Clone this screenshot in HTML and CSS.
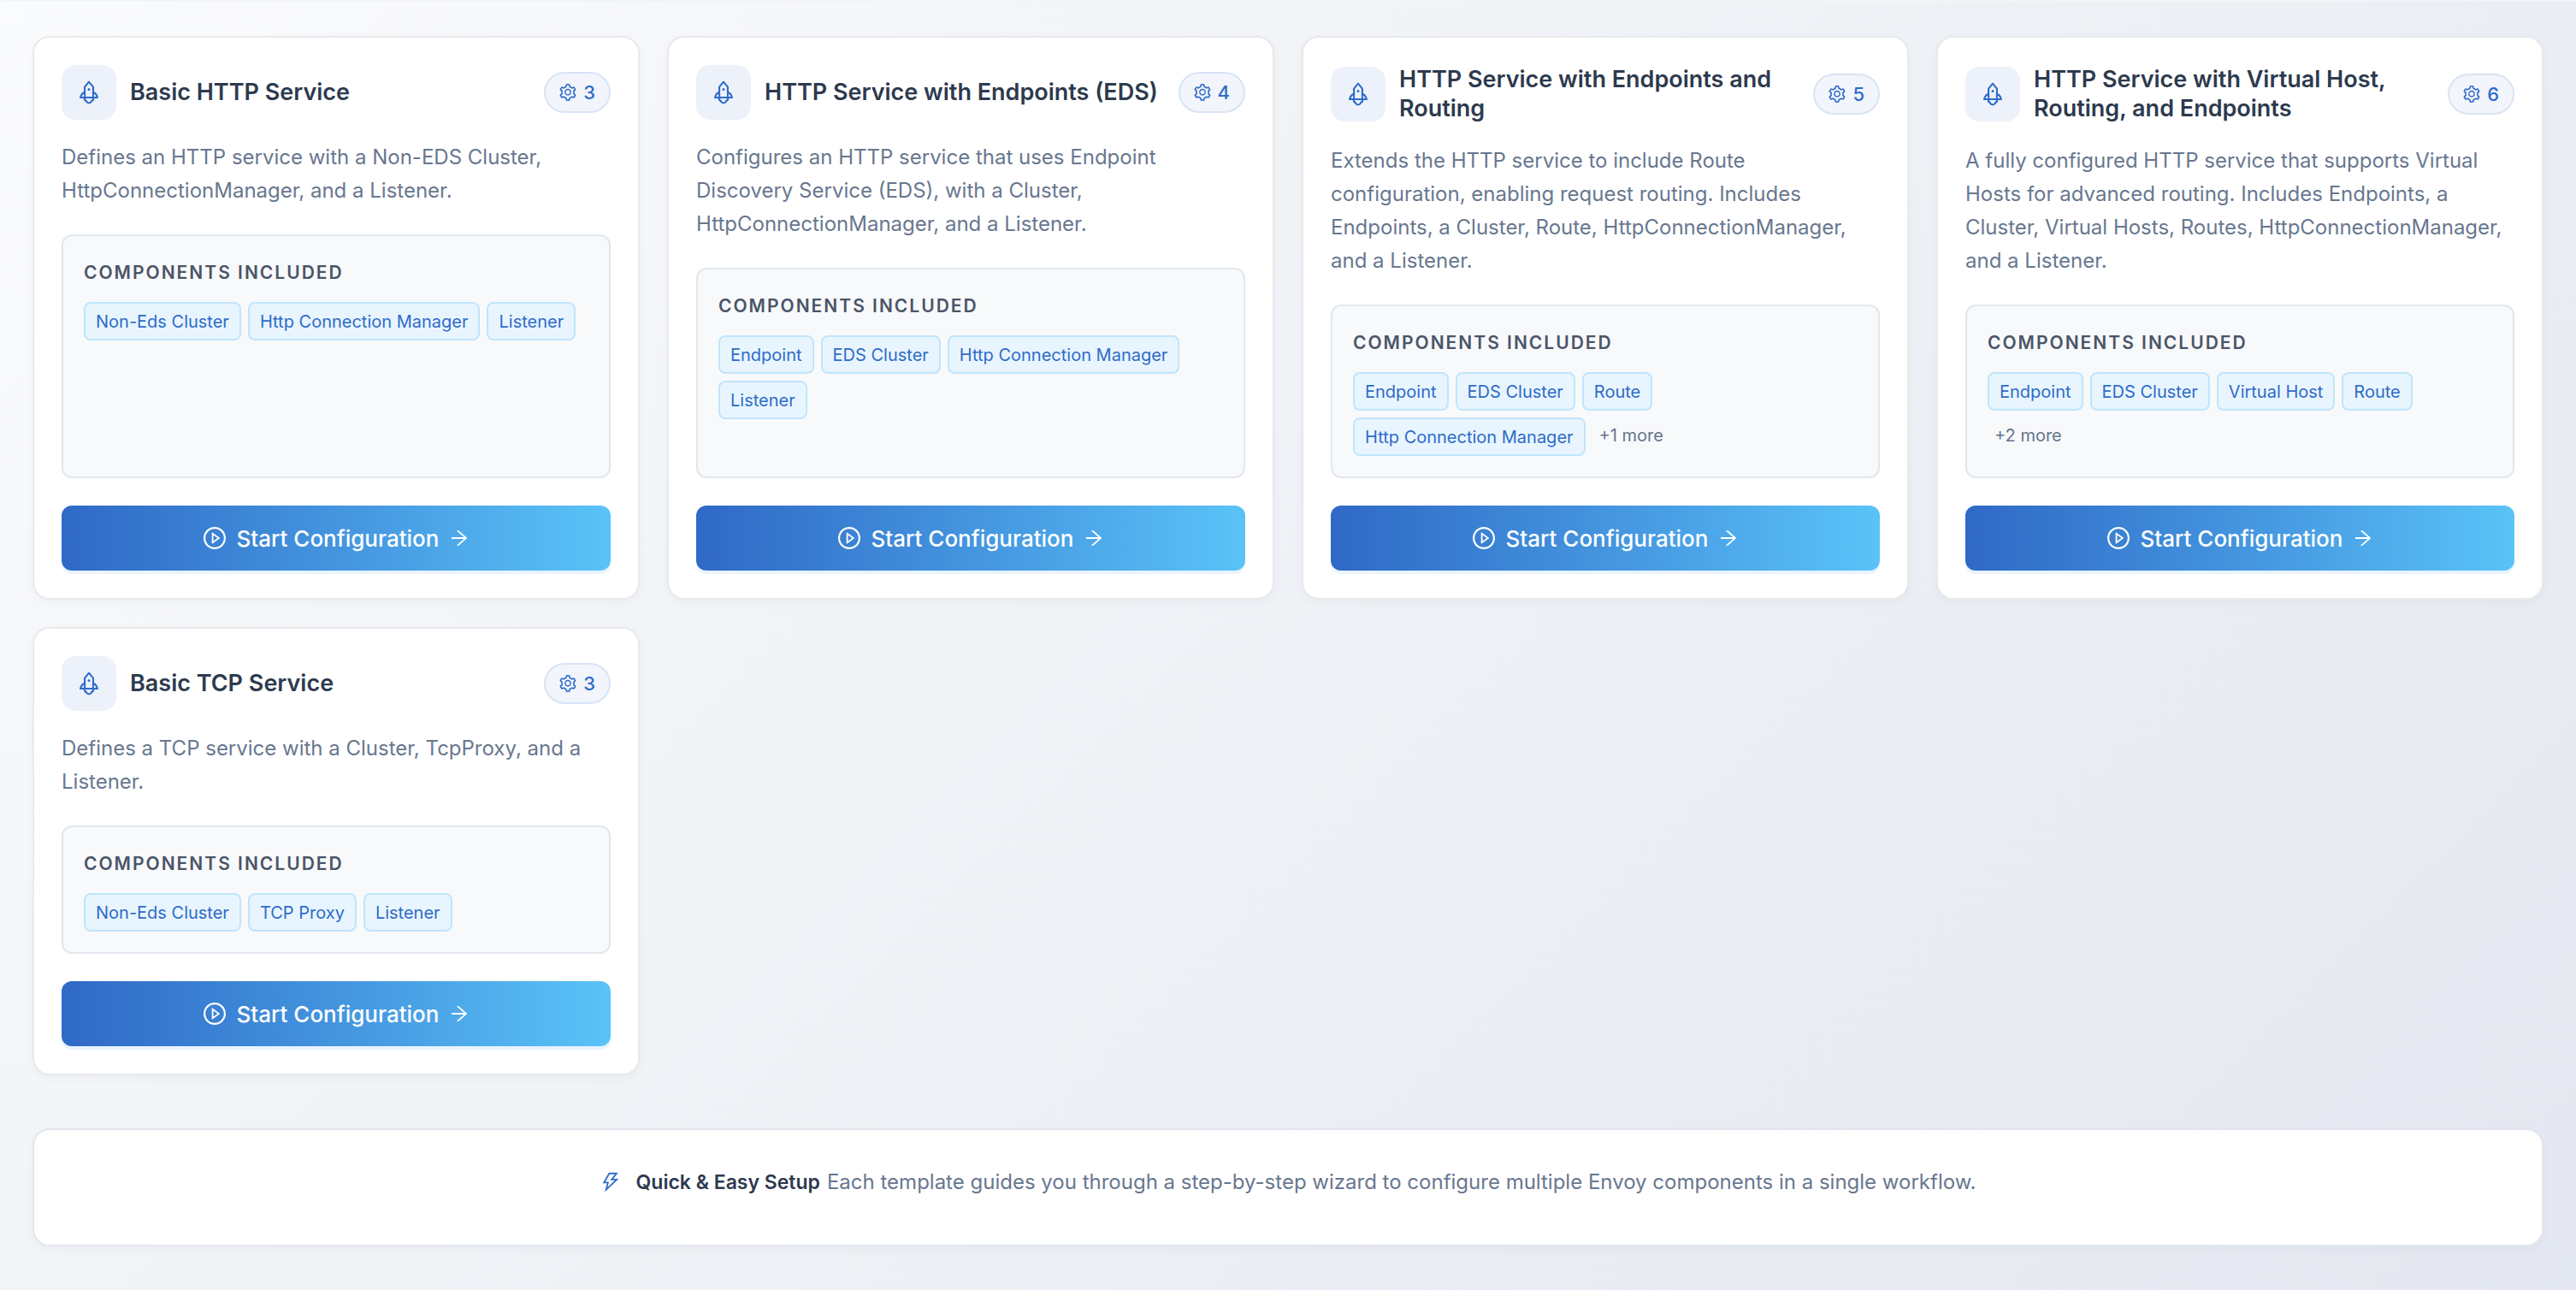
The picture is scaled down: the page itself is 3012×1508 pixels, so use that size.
FILE: index.html
```html
<!DOCTYPE html>
<html lang="en">
<head>
<meta charset="utf-8">
<title>Service templates</title>
<link rel="stylesheet" href="styles.css">
</head>
<body>
<svg class="sprite" aria-hidden="true">
  <symbol id="rocket" viewBox="64 64 896 896"><path d="M864 736c0-111.6-65.4-208-160-252.900V317.300c0-15.100-5.300-29.700-15.100-41.200L536.500 95.400C530.100 87.800 521 84 512 84s-18.100 3.800-24.500 11.400L335.100 276.100a63.970 63.970 0 00-15.100 41.200v165.800C225.400 528 160 624.400 160 736h156.500c-2.300 7.200-3.500 15-3.500 23.800 0 22.100 7.600 43.700 21.400 60.800a97.200 97.200 0 0043.100 30.600c23.100 54 75.600 88.800 134.500 88.800 29.100 0 57.300-8.600 81.400-24.800 23.600-15.800 41.900-37.900 53-64a97 97 0 0043.100-30.500 97.520 97.520 0 0021.400-60.800c0-8.400-1.100-16.400-3.100-23.800H864zM762.300 621.400c9.400 14.600 17 30.300 22.500 46.600H700V558.700a211.600 211.600 0 0162.300 62.700zM388 483.100V318.800l124-147 124 147V668H388V483.100zM239.200 668c5.500-16.300 13.100-32 22.500-46.600 16.300-25.200 37.500-46.500 62.300-62.700V668h-84.800zm388.900 116.200c-5.200 3-11.200 4.200-17.100 3.400l-19.500-2.400-2.800 19.400c-5.400 37.900-38.400 66.500-76.700 66.500-38.300 0-71.300-28.600-76.700-66.500l-2.800-19.500-19.500 2.500a27.700 27.700 0 01-17.100-3.500c-8.700-5-14.100-14.300-14.100-24.400 0-10.600 5.900-19.400 14.600-23.800h231.300c8.800 4.500 14.600 13.300 14.600 23.800-.1 10.200-5.500 19.600-14.200 24.500zM464 400a48 48 0 1096 0 48 48 0 10-96 0z"/></symbol>
  <symbol id="gear" viewBox="64 64 896 896"><path d="M924.800 625.700l-65.500-56c3.100-19 4.700-38.400 4.700-57.800s-1.600-38.800-4.700-57.800l65.500-56a32.030 32.030 0 009.300-35.200l-.9-2.600a443.740 443.740 0 00-79.700-137.900l-1.800-2.100a32.120 32.120 0 00-35.100-9.500l-81.300 28.900c-30-24.600-63.500-44-99.700-57.600l-15.700-85a32.050 32.050 0 00-25.800-25.700l-2.700-.5c-52.100-9.400-106.900-9.400-159 0l-2.700.5a32.050 32.050 0 00-25.800 25.700l-15.800 85.400a351.860 351.860 0 00-99 57.400l-81.900-29.100a32 32 0 00-35.100 9.500l-1.800 2.100a446.020 446.020 0 00-79.700 137.900l-.9 2.600c-4.500 12.500-.8 26.500 9.300 35.200l66.300 56.600c-3.100 18.800-4.600 38-4.600 57.100 0 19.200 1.500 38.400 4.600 57.100L99 625.500a32.030 32.030 0 00-9.300 35.200l.9 2.600c18.100 50.400 44.900 96.900 79.700 137.900l1.800 2.100a32.120 32.120 0 0035.100 9.500l81.900-29.100c29.800 24.500 63.100 43.900 99 57.400l15.800 85.400a32.050 32.050 0 0025.800 25.700l2.700.5a449.400 449.400 0 00159 0l2.700-.5a32.050 32.050 0 0025.800-25.700l15.700-85a350 350 0 0099.700-57.600l81.300 28.900a32 32 0 0035.100-9.500l1.800-2.100c34.800-41.100 61.600-87.500 79.700-137.900l.9-2.600c4.500-12.300.8-26.300-9.300-35zM788.300 465.900c2.500 15.100 3.800 30.600 3.800 46.100s-1.300 31-3.800 46.100l-6.600 40.100 74.700 63.900a370.030 370.030 0 01-42.600 73.600L721 702.800l-31.400 25.800c-23.900 19.600-50.500 35-79.300 45.800l-38.100 14.300-17.900 97a377.500 377.500 0 01-85 0l-17.900-97.200-37.800-14.500c-28.500-10.800-55-26.200-78.700-45.700l-31.400-25.900-93.400 33.200c-17-22.900-31.200-47.600-42.600-73.600l75.500-64.500-6.500-40c-2.400-14.900-3.700-30.300-3.700-45.500 0-15.300 1.200-30.600 3.700-45.500l6.500-40-75.500-64.500c11.300-26.100 25.600-50.700 42.600-73.600l93.400 33.200 31.400-25.900c23.700-19.500 50.200-34.900 78.700-45.700l37.900-14.300 17.900-97.200c28.100-3.200 56.800-3.200 85 0l17.900 97 38.100 14.300c28.700 10.800 55.400 26.200 79.300 45.800l31.400 25.800 92.800-32.900c17 22.900 31.200 47.600 42.600 73.600L781.800 426l6.500 39.900zM512 326c-97.200 0-176 78.800-176 176s78.800 176 176 176 176-78.800 176-176-78.800-176-176-176zm79.200 255.200A111.600 111.600 0 01512 614c-29.900 0-58-11.700-79.200-32.800A111.600 111.600 0 01400 502c0-29.900 11.700-58 32.800-79.200C454 401.600 482.100 390 512 390c29.900 0 58 11.600 79.200 32.800A111.600 111.600 0 01624 502c0 29.900-11.700 58-32.800 79.200z"/></symbol>
  <symbol id="play" viewBox="64 64 896 896"><path d="M512 64C264.600 64 64 264.600 64 512s200.600 448 448 448 448-200.600 448-448S759.400 64 512 64zm0 820c-205.400 0-372-166.600-372-372s166.600-372 372-372 372 166.600 372 372-166.600 372-372 372z"/><path d="M719.400 499.100l-296.100-215A15.900 15.900 0 00398 297v430c0 13.100 14.800 20.500 25.300 12.900l296.100-215a15.900 15.900 0 000-25.800zm-257.600 134V390.900L628.500 512 461.800 633.100z"/></symbol>
  <symbol id="arrow" viewBox="64 64 896 896"><path d="M869 487.800L491.200 159.900c-2.900-2.500-6.600-3.900-10.500-3.900h-88.500c-7.400 0-10.800 9.200-5.200 14l350.200 304H152c-4.400 0-8 3.600-8 8v60c0 4.400 3.600 8 8 8h585.100L386.900 854c-5.600 4.900-2.200 14 5.200 14h91.500c1.900 0 3.800-.7 5.200-2L869 536.200a32.070 32.070 0 000-48.400z"/></symbol>
  <symbol id="bolt" viewBox="64 64 896 896"><path d="M848 359.300H627.700L825.800 109c4.100-5.300.4-13-6.300-13H436c-2.800 0-5.500 1.500-6.900 4L170 547.500c-3.100 5.300.7 12 6.900 12h174.400l-89.400 357.600c-1.900 7.800 7.500 13.300 13.300 7.700L853.500 373c5.200-4.900 1.700-13.700-5.500-13.700zM378.200 732.500l60.300-241H281.100l189.600-327.400h224.600L487 427.400h211L378.200 732.500z"/></symbol>
</svg>
<main class="page">
  <section class="grid">
    <article class="card">
      <header class="head"><span class="mark"><svg><use href="#rocket"/></svg></span><h2 class="title">Basic HTTP Service</h2><span class="count"><svg><use href="#gear"/></svg>3</span></header>
      <p class="desc">Defines an HTTP service with a Non-EDS Cluster, HttpConnectionManager, and a Listener.</p>
      <div class="parts"><h3 class="label">Components Included</h3>
        <ul class="tags"><li class="tag">Non-Eds Cluster</li><li class="tag">Http Connection Manager</li><li class="tag">Listener</li></ul></div>
      <button class="start" type="button"><svg class="play"><use href="#play"/></svg><span>Start Configuration</span><svg class="arrow"><use href="#arrow"/></svg></button>
    </article>
    <article class="card">
      <header class="head"><span class="mark"><svg><use href="#rocket"/></svg></span><h2 class="title">HTTP Service with Endpoints (EDS)</h2><span class="count"><svg><use href="#gear"/></svg>4</span></header>
      <p class="desc">Configures an HTTP service that uses Endpoint Discovery Service (EDS), with a Cluster, HttpConnectionManager, and a Listener.</p>
      <div class="parts"><h3 class="label">Components Included</h3>
        <ul class="tags"><li class="tag">Endpoint</li><li class="tag">EDS Cluster</li><li class="tag">Http Connection Manager</li><li class="tag">Listener</li></ul></div>
      <button class="start" type="button"><svg class="play"><use href="#play"/></svg><span>Start Configuration</span><svg class="arrow"><use href="#arrow"/></svg></button>
    </article>
    <article class="card">
      <header class="head"><span class="mark"><svg><use href="#rocket"/></svg></span><h2 class="title">HTTP Service with Endpoints and Routing</h2><span class="count"><svg><use href="#gear"/></svg>5</span></header>
      <p class="desc">Extends the HTTP service to include Route configuration, enabling request routing. Includes Endpoints, a Cluster, Route, HttpConnectionManager, and a Listener.</p>
      <div class="parts"><h3 class="label">Components Included</h3>
        <ul class="tags"><li class="tag">Endpoint</li><li class="tag">EDS Cluster</li><li class="tag">Route</li><li class="tag">Http Connection Manager</li><li class="more">+1 more</li></ul></div>
      <button class="start" type="button"><svg class="play"><use href="#play"/></svg><span>Start Configuration</span><svg class="arrow"><use href="#arrow"/></svg></button>
    </article>
    <article class="card">
      <header class="head"><span class="mark"><svg><use href="#rocket"/></svg></span><h2 class="title">HTTP Service with Virtual Host, Routing, and Endpoints</h2><span class="count"><svg><use href="#gear"/></svg>6</span></header>
      <p class="desc">A fully configured HTTP service that supports Virtual Hosts for advanced routing. Includes Endpoints, a Cluster, Virtual Hosts, Routes, HttpConnectionManager, and a Listener.</p>
      <div class="parts"><h3 class="label">Components Included</h3>
        <ul class="tags"><li class="tag">Endpoint</li><li class="tag">EDS Cluster</li><li class="tag">Virtual Host</li><li class="tag">Route</li><li class="more">+2 more</li></ul></div>
      <button class="start" type="button"><svg class="play"><use href="#play"/></svg><span>Start Configuration</span><svg class="arrow"><use href="#arrow"/></svg></button>
    </article>
    <article class="card">
      <header class="head"><span class="mark"><svg><use href="#rocket"/></svg></span><h2 class="title">Basic TCP Service</h2><span class="count"><svg><use href="#gear"/></svg>3</span></header>
      <p class="desc">Defines a TCP service with a Cluster, TcpProxy, and a Listener.</p>
      <div class="parts"><h3 class="label">Components Included</h3>
        <ul class="tags"><li class="tag">Non-Eds Cluster</li><li class="tag">TCP Proxy</li><li class="tag">Listener</li></ul></div>
      <button class="start" type="button"><svg class="play"><use href="#play"/></svg><span>Start Configuration</span><svg class="arrow"><use href="#arrow"/></svg></button>
    </article>
  </section>
  <footer class="note"><svg><use href="#bolt"/></svg><strong>Quick &amp; Easy Setup</strong><span>Each template guides you through a step-by-step wizard to configure multiple Envoy components in a single workflow.</span></footer>
</main>
</body>
</html>
```
FILE: styles.css
```css
* { box-sizing: border-box; }

body {
  margin: 0;
  min-height: 100vh;
  border-top: 2px solid #f3f4f6;
  background: linear-gradient(135deg, #fafbfd 0%, #eff2f6 45%, #e3e7f0 100%);
  font-family: Inter, "Liberation Sans", sans-serif;
  color: #2d3a4e;
}

.sprite { display: none; }
svg { fill: currentColor; flex: none; }

.page { padding: 40px 38px 50px; }

.grid {
  display: grid;
  grid-template-columns: repeat(4, minmax(0, 1fr));
  gap: 32px;
}

.card {
  display: flex;
  flex-direction: column;
  padding: 32px;
  border: 2px solid #e8e9eb;
  border-radius: 20px;
  background: #fff;
  box-shadow: 0 4px 12px rgba(0, 0, 0, 0.03);
}

.head {
  display: flex;
  align-items: center;
  gap: 16px;
  margin-bottom: 24px;
}

.mark {
  display: flex;
  flex: none;
  align-items: center;
  justify-content: center;
  width: 64px;
  height: 64px;
  border-radius: 16px;
  background: #edf2fa;
  color: #2f6bc9;
}
.mark svg { width: 28px; height: 28px; }

.title {
  flex: 1;
  margin: 0;
  font-size: 27px;
  font-weight: 600;
  line-height: 34px;
}

.count {
  display: flex;
  flex: none;
  align-items: center;
  gap: 8px;
  height: 48px;
  padding: 0 16px;
  border: 2px solid #d9e4f5;
  border-radius: 24px;
  background: #f2f5fb;
  color: #2f6bc9;
  font-size: 22px;
  font-weight: 500;
}
.count svg { width: 20px; height: 20px; }

.desc {
  margin: 0 0 32px;
  color: #68778f;
  font-size: 24px;
  line-height: 39px;
}

.parts {
  flex: 1;
  margin-bottom: 32px;
  padding: 24px;
  border: 2px solid #e2e7ee;
  border-radius: 12px;
  background: #f8f9fb;
}

.label {
  margin: 0 0 16px;
  color: #4a5568;
  font-size: 21px;
  font-weight: 600;
  line-height: 37px;
  letter-spacing: 2px;
  text-transform: uppercase;
}

.tags {
  display: flex;
  flex-wrap: wrap;
  gap: 8px;
  margin: 0;
  padding: 0;
  list-style: none;
  font-size: 20px;
  font-weight: 400;
}

.tag {
  height: 45px;
  padding: 0 12px;
  border: 2px solid #bfe5fd;
  border-radius: 8px;
  background: #e8f5fe;
  color: #2f6bc9;
  line-height: 42px;
}

.more {
  padding: 0 8px;
  color: #64748b;
  line-height: 42px;
}

.start {
  display: flex;
  align-items: center;
  justify-content: center;
  gap: 13px;
  height: 76px;
  border: 0;
  border-radius: 12px;
  background: linear-gradient(90deg, #2f69c6, #4699e1 55%, #5ac3f8);
  box-shadow: 0 4px 0 #e9f4fe;
  color: #fff;
  font: 500 26px Inter, "Liberation Sans", sans-serif;
  cursor: pointer;
}
.play { width: 26px; height: 26px; }
.arrow { width: 22px; height: 22px; }

.note {
  display: flex;
  align-items: center;
  justify-content: center;
  margin-top: 62px;
  padding: 43px 32px 55px;
  border: 2px solid #e2e6ec;
  border-radius: 20px;
  background: #fff;
  box-shadow: 0 4px 12px rgba(0, 0, 0, 0.03);
  color: #68778f;
  font-size: 24px;
  line-height: 36px;
}
.note svg { width: 24px; height: 24px; margin-right: 18px; color: #2f6bc9; }
.note strong { margin-right: 8px; color: #2d3a4e; font-size: 23px; font-weight: 600; }
```
